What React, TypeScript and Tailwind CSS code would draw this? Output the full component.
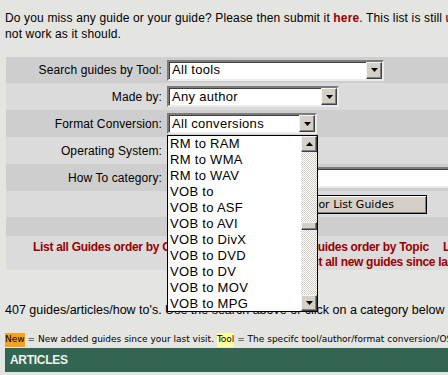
import React from 'react';

// classic win9x widgets
const raised =
  'bg-[#d4d0c8] border border-t-[#f4f4f4] border-l-[#f4f4f4] border-r-[#404040] border-b-[#404040] shadow-[inset_-1px_-1px_#808080]';

function DownArrow() {
  return (
    <svg width="7" height="4" viewBox="0 0 7 4">
      <polygon points="0,0 7,0 3.5,4" fill="#000" />
    </svg>
  );
}

function UpArrow() {
  return (
    <svg width="7" height="4" viewBox="0 0 7 4">
      <polygon points="0,4 3.5,0 7,4" fill="#000" />
    </svg>
  );
}

function Select({ value, width }: { value: string; width: string }) {
  return (
    <div
      className={`${width} h-[21px] flex items-center bg-white border-2 border-t-[#7b7b7b] border-l-[#7b7b7b] border-r-[#ebebeb] border-b-[#ebebeb] shadow-[inset_1px_1px_#404040]`}
    >
      <span className="flex-1 pl-[3px] text-[13px] leading-[16px] tracking-[0.3px] whitespace-nowrap overflow-hidden">
        {value}
      </span>
      <div className={`${raised} w-[16px] h-[17px] flex items-center justify-center`}>
        <DownArrow />
      </div>
    </div>
  );
}

const options = [
  'RM to RAM',
  'RM to WMA',
  'RM to WAV',
  'VOB to',
  'VOB to ASF',
  'VOB to AVI',
  'VOB to DivX',
  'VOB to DVD',
  'VOB to DV',
  'VOB to MOV',
  'VOB to MPG',
];

function Row({
  label,
  dark,
  h,
  children,
}: {
  label?: string;
  dark: boolean;
  h: string;
  children?: React.ReactNode;
}) {
  return (
    <div className={`flex ${h} ${dark ? 'bg-[#cecece]' : 'bg-[#dbdbdb]'}`}>
      <div className="w-[159px] shrink-0 flex items-center justify-end pr-[3px] text-[12px] tracking-[0.1px]">
        {label}
      </div>
      <div className="flex-1 flex items-center pl-[2px]">{children}</div>
    </div>
  );
}

export default function App() {
  return (
    <div className="relative w-[448px] h-[375px] overflow-hidden bg-[#e4e4e0] text-black font-['Liberation_Sans',Arial,sans-serif]">
      <div className="pt-[10px] pl-[5px] text-[12px] leading-[16px] tracking-[0.15px] whitespace-nowrap">
        <div>
          Do you miss any guide or your guide? Please then submit it{' '}
          <a className="font-bold text-[#990000]">here</a>. This list is still under construction and some
          things might
        </div>
        <div>not work as it should.</div>
      </div>

      <div className="mt-[15px] ml-[6px] w-[640px]">
        <Row label="Search guides by Tool:" dark h="h-[26px]">
          <Select value="All tools" width="w-[217px]" />
        </Row>
        <Row label="Made by:" dark={false} h="h-[27px]">
          <Select value="Any author" width="w-[172px]" />
        </Row>
        <Row label="Format Conversion:" dark h="h-[27px]">
          <Select value="All conversions" width="w-[150px]" />
        </Row>
        <Row label="Operating System:" dark={false} h="h-[27px]" />
        <Row label="How To category:" dark h="h-[27px]">
          <Select value="All categories" width="w-[330px]" />
        </Row>
        <Row dark={false} h="h-[26px]">
          <button
            className={`ml-[77px] w-[183px] h-[19px] bg-[#d4d0c8] border border-black shadow-[inset_1px_1px_#fff,inset_-1px_-1px_#808080] text-[11px] leading-[15px] font-['DejaVu_Sans',Verdana,sans-serif] text-black`}
          >
            Search or List Guides
          </button>
        </Row>
        <div className="h-[19px] bg-[#cecece]" />
        <div className="h-[34px] bg-[#dbdbdb] pt-[4px] text-[12px] leading-[15px] font-bold text-[#990000] tracking-[-0.3px] whitespace-nowrap">
          <div className="flex">
            <span className="ml-[27px] w-[237px]">List all Guides order by Category</span>
            <span className="w-[173px]">List all Guides order by Topic</span>
            <span>List all Guides order by Date</span>
          </div>
          <div className="pl-[296px]">List all new guides since last visit</div>
        </div>
      </div>

      <div className="mt-[32px] pl-[5px] text-[12.5px] leading-[16px] whitespace-nowrap">
        407 guides/articles/how to's. Use the search above or click on a category below here.
      </div>

      <div className="mt-[15px] pl-[5px] h-[14px] flex items-center text-[9px] whitespace-nowrap font-['DejaVu_Sans',Verdana,sans-serif]">
        <span className="bg-[#f5a31e]">New</span>
        <span>&nbsp;= New added guides since your last visit.&nbsp;</span>
        <span className="bg-[#ffff99]">Tool</span>
        <span>&nbsp;= The specifc tool/author/format conversion/OS you searched for</span>
      </div>

      <div className="mt-[1px] ml-[5px] h-[24px] bg-[#336652] flex items-center pl-[5px] text-[12px] font-bold text-[#eef3ee] tracking-[-0.3px]">
        ARTICLES
      </div>

      {/* open conversion dropdown */}
      <div className="absolute left-[167px] top-[135px] w-[151px] h-[177px] bg-white border border-black flex z-10">
        <div className="flex-1 overflow-hidden">
          {options.map((o) => (
            <div key={o} className="h-[16px] pl-[2px] text-[13px] leading-[16px] tracking-[0.3px] whitespace-nowrap">
              {o}
            </div>
          ))}
        </div>
        <div className="w-[16px] flex flex-col">
          <div className={`${raised} h-[16px] flex items-center justify-center`}>
            <UpArrow />
          </div>
          <div className="relative flex-1 bg-[repeating-conic-gradient(#d4d0c8_0%_25%,#ffffff_0%_50%)] bg-[length:2px_2px]">
            <div className={`${raised} absolute left-0 top-[70px] w-[16px] h-[8px]`} />
          </div>
          <div className={`${raised} h-[16px] flex items-center justify-center`}>
            <DownArrow />
          </div>
        </div>
      </div>
    </div>
  );
}
